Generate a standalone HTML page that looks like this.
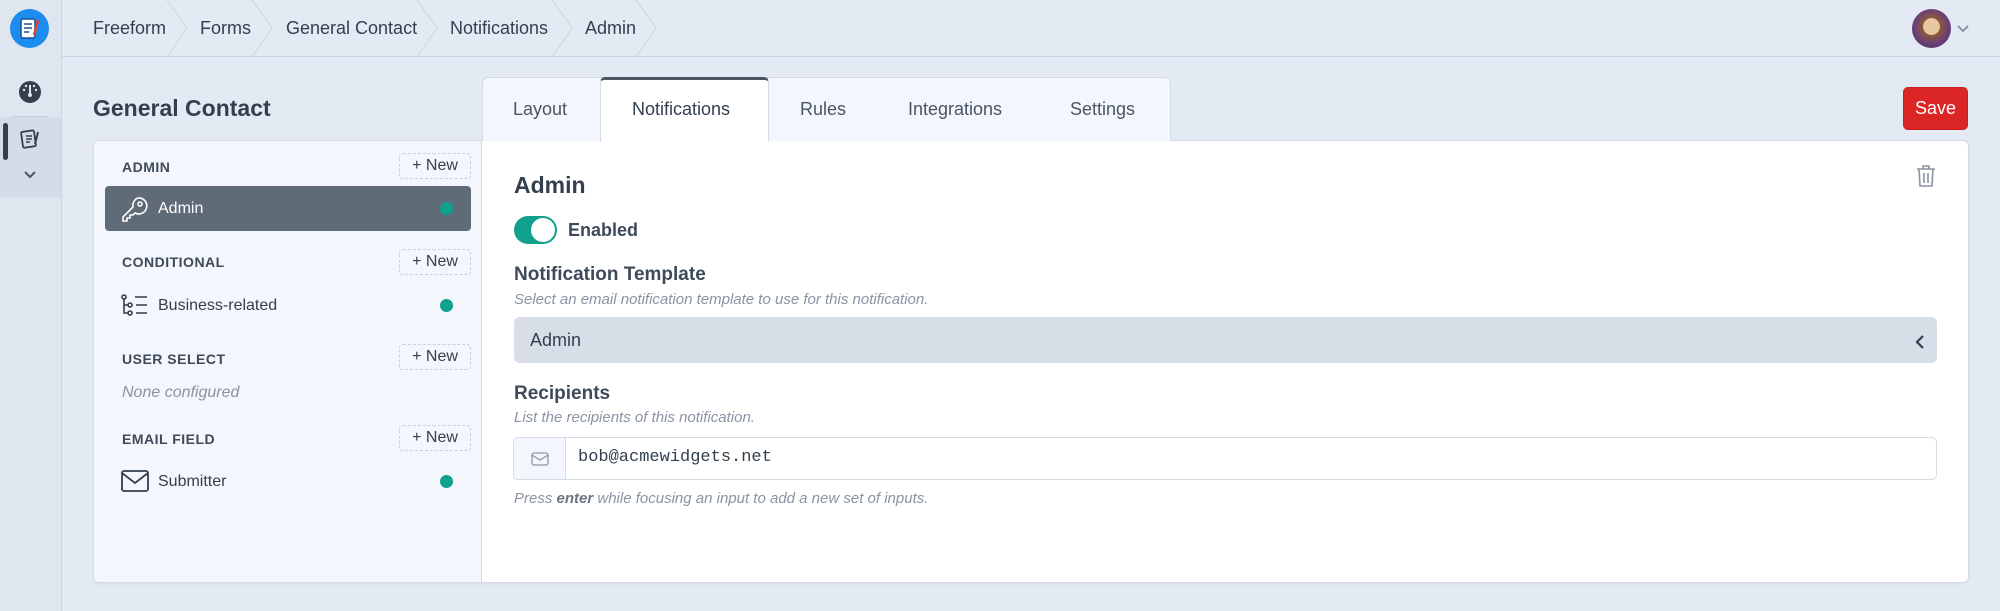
<!DOCTYPE html>
<html><head><meta charset="utf-8"><style>
*{box-sizing:border-box;margin:0;padding:0}
body{width:2000px;height:611px;background:#e4eaf4;font-family:"Liberation Sans",sans-serif;color:#333f4d;position:relative;overflow:hidden}
.abs{position:absolute}
.side{left:0;top:0;width:62px;height:611px;background:#dfe6f0;border-right:1px solid #cbd4e0}
.hdr{left:62px;top:0;width:1938px;height:57px;border-bottom:1px solid #cbd4e0;background:#e4eaf4}
.bc{top:18px;font-size:18px;color:#333f4d}
.chev{top:0}
.lbl{font-size:14px;font-weight:bold;letter-spacing:.5px;color:#3e4a59;left:122px}
.new{left:399px;width:72px;height:26px;border:1px dashed #c8d0dc;border-radius:4px;font-size:16px;color:#333f4d;text-align:center;line-height:24px}
.dot{left:440px;width:13px;height:13px;border-radius:50%;background:#10a08c}
.item{left:158px;font-size:16px;color:#333f4d}
.tab{top:99px;font-size:18px;color:#4a5564}
.help{font-size:15px;font-style:italic;color:#8a94a3;left:514px}
.flbl{font-size:19px;font-weight:bold;color:#3e4a59;left:514px}
</style></head><body>
<div class="abs side"></div>
<div class="abs" style="left:10px;top:9px;width:39px;height:39px;border-radius:50%;background:#1d8cf0"></div>
<svg class="abs" style="left:19px;top:17px" width="22" height="24" viewBox="0 0 22 24"><rect x="2" y="2" width="14" height="19" rx="2" fill="#fff" stroke="#1d4f91" stroke-width="1.5"/><path d="M5 7h8M5 11h8M5 15h5" stroke="#1d4f91" stroke-width="1.5"/><path d="M19 3l-4 15" stroke="#e8402a" stroke-width="2.5"/></svg>
<svg class="abs" style="left:18px;top:80px" width="24" height="24" viewBox="0 0 24 24"><circle cx="12" cy="12" r="11" fill="#333f4d"/><path d="M12 5v9" stroke="#dfe6f0" stroke-width="2"/><circle cx="12" cy="15" r="2" fill="#dfe6f0"/><circle cx="6" cy="10" r="1.2" fill="#dfe6f0"/><circle cx="18" cy="10" r="1.2" fill="#dfe6f0"/><circle cx="8" cy="6" r="1.2" fill="#dfe6f0"/><circle cx="16" cy="6" r="1.2" fill="#dfe6f0"/></svg>
<div class="abs" style="left:12px;top:116px;width:36px;height:1px;background:#c4cdd9"></div>
<div class="abs" style="left:0;top:117px;width:61px;height:80px;background:#d4dce7"></div>
<div class="abs" style="left:3px;top:123px;width:5px;height:37px;border-radius:3px;background:#333f4d"></div>
<svg class="abs" style="left:19px;top:128px" width="22" height="22" viewBox="0 0 22 22"><rect x="3" y="3" width="13" height="16" rx="1.5" fill="none" stroke="#333f4d" stroke-width="1.8" transform="rotate(-8 10 11)"/><path d="M7 8h6M7 11h6M7 14h4" stroke="#333f4d" stroke-width="1.5"/><path d="M19 4l-3 12" stroke="#333f4d" stroke-width="2"/></svg>
<svg class="abs" style="left:23px;top:170px" width="14" height="10" viewBox="0 0 14 10"><path d="M2 2l5 5 5-5" fill="none" stroke="#4a5564" stroke-width="2"/></svg>

<div class="abs hdr"></div>
<svg class="abs chev" style="left:62px" width="620" height="57"><g fill="none" stroke="#cbd4e0" stroke-width="1"><path d="M105 0l20 28-20 29"/><path d="M190 0l20 28-20 29"/><path d="M355 0l20 28-20 29"/><path d="M490 0l20 28-20 29"/><path d="M574 0l20 28-20 29"/></g></svg>
<div class="abs bc" style="left:93px">Freeform</div>
<div class="abs bc" style="left:200px">Forms</div>
<div class="abs bc" style="left:286px">General Contact</div>
<div class="abs bc" style="left:450px">Notifications</div>
<div class="abs bc" style="left:585px">Admin</div>
<div class="abs" style="left:1912px;top:9px;width:39px;height:39px;border-radius:50%;background:radial-gradient(circle at 50% 45%,#e8c8a0 0 28%,#8a5a3a 30%,#6a3f7a 60%,#3a2a4a 100%)"></div>
<svg class="abs" style="left:1956px;top:24px" width="14" height="10"><path d="M2 2l5 5 5-5" fill="none" stroke="#8a94a3" stroke-width="2"/></svg>

<div class="abs" style="left:93px;top:95px;font-size:23px;font-weight:bold;color:#333f4d">General Contact</div>

<div class="abs" style="left:93px;top:140px;width:1876px;height:443px;background:#fff;border:1px solid #d3dbe6;border-radius:6px;box-shadow:0 1px 3px rgba(0,0,0,.06)"></div>
<div class="abs" style="left:94px;top:141px;width:388px;height:441px;background:#f3f6fd;border-right:1px solid #d3dbe6;border-radius:6px 0 0 6px"></div>

<div class="abs lbl" style="top:159px">ADMIN</div>
<div class="abs new" style="top:153px">+ New</div>
<div class="abs" style="left:105px;top:186px;width:366px;height:45px;background:#606b78;border-radius:4px"></div>
<svg class="abs" style="left:121px;top:195px" width="28" height="28" viewBox="0 0 28 28"><path d="M17 3a8 8 0 1 1-3 15l-2 2h-3v3H6v3H2v-4l10-10A8 8 0 0 1 17 3z" fill="none" stroke="#fff" stroke-width="1.6"/><circle cx="19" cy="9" r="2" fill="none" stroke="#fff" stroke-width="1.5"/></svg>
<div class="abs item" style="left:158px;top:200px;color:#fff">Admin</div>
<div class="abs dot" style="top:202px"></div>

<div class="abs lbl" style="top:254px">CONDITIONAL</div>
<div class="abs new" style="top:249px">+ New</div>
<svg class="abs" style="left:121px;top:294px" width="28" height="22" viewBox="0 0 28 22"><g fill="none" stroke="#333f4d" stroke-width="1.6"><circle cx="3" cy="3" r="2"/><path d="M3 5v14h4M3 11h4"/><circle cx="9" cy="11" r="2"/><circle cx="9" cy="19" r="2"/><path d="M14 3h12M15 11h11M15 19h11"/></g></svg>
<div class="abs item" style="top:297px">Business-related</div>
<div class="abs dot" style="top:299px"></div>

<div class="abs lbl" style="top:351px">USER SELECT</div>
<div class="abs new" style="top:344px">+ New</div>
<div class="abs" style="left:122px;top:384px;font-size:16px;font-style:italic;color:#8a94a3">None configured</div>

<div class="abs lbl" style="top:431px">EMAIL FIELD</div>
<div class="abs new" style="top:425px">+ New</div>
<svg class="abs" style="left:121px;top:470px" width="28" height="22" viewBox="0 0 28 22"><rect x="1" y="1" width="26" height="20" rx="2" fill="none" stroke="#333f4d" stroke-width="1.8"/><path d="M1 3l13 10L27 3" fill="none" stroke="#333f4d" stroke-width="1.8"/></svg>
<div class="abs item" style="top:473px">Submitter</div>
<div class="abs dot" style="top:475px"></div>

<div class="abs" style="left:482px;top:77px;width:689px;height:64px;background:#f3f6fd;border:1px solid #d3dbe6;border-bottom:none;border-radius:6px 6px 0 0"></div>
<div class="abs" style="left:600px;top:77px;width:169px;height:65px;background:#fff;border-top:3px solid #4a5564;border-left:1px solid #d3dbe6;border-right:1px solid #d3dbe6;border-radius:5px 5px 0 0"></div>
<div class="abs tab" style="left:513px">Layout</div>
<div class="abs tab" style="left:632px;color:#333f4d">Notifications</div>
<div class="abs tab" style="left:800px">Rules</div>
<div class="abs tab" style="left:908px">Integrations</div>
<div class="abs tab" style="left:1070px">Settings</div>

<div class="abs" style="left:1903px;top:87px;width:65px;height:43px;background:#dc2626;border:1px solid #c81e1e;border-radius:5px;color:#fff;font-size:18px;text-align:center;line-height:41px">Save</div>
<svg class="abs" style="left:1915px;top:164px" width="22" height="24" viewBox="0 0 22 24"><g fill="none" stroke="#8a94a3" stroke-width="1.6"><path d="M2 5h18M8 5V2h6v3"/><path d="M4 5l1 17h12l1-17"/><path d="M9 9v10M13 9v10"/></g></svg>

<div class="abs" style="left:514px;top:172px;font-size:23px;font-weight:bold;color:#333f4d">Admin</div>
<div class="abs" style="left:514px;top:216px;width:43px;height:28px;border-radius:14px;background:#10a08c"></div>
<div class="abs" style="left:531px;top:218px;width:24px;height:24px;border-radius:50%;background:#fff"></div>
<div class="abs" style="left:568px;top:220px;font-size:18px;font-weight:bold;color:#3e4a59">Enabled</div>

<div class="abs flbl" style="top:264px">Notification Template</div>
<div class="abs help" style="top:291px">Select an email notification template to use for this notification.</div>
<div class="abs" style="left:514px;top:317px;width:1423px;height:46px;background:#d8dee8;border-radius:5px"></div>
<div class="abs" style="left:530px;top:330px;font-size:18px;color:#333f4d">Admin</div>
<svg class="abs" style="left:1914px;top:334px" width="12" height="16"><path d="M9 2L3 8l6 6" fill="none" stroke="#333f4d" stroke-width="2.2"/></svg>

<div class="abs flbl" style="top:383px">Recipients</div>
<div class="abs help" style="top:409px">List the recipients of this notification.</div>
<div class="abs" style="left:513px;top:437px;width:1424px;height:43px;border:1px solid #d3dbe6;border-radius:5px;background:#fff"></div>
<div class="abs" style="left:514px;top:438px;width:52px;height:41px;background:#f3f6fd;border-right:1px solid #d3dbe6;border-radius:5px 0 0 5px"></div>
<svg class="abs" style="left:531px;top:452px" width="18" height="14"><rect x="1" y="1" width="16" height="12" rx="2" fill="none" stroke="#8a94a3" stroke-width="1.3"/><path d="M1 3l8 5 8-5" fill="none" stroke="#8a94a3" stroke-width="1.3"/></svg>
<div class="abs" style="left:578px;top:448px;font-family:'Liberation Mono',monospace;font-size:17px;color:#333f4d">bob@acmewidgets.net</div>
<div class="abs help" style="top:490px">Press <b style="color:#6b7684">enter</b> while focusing an input to add a new set of inputs.</div>
</body></html>
